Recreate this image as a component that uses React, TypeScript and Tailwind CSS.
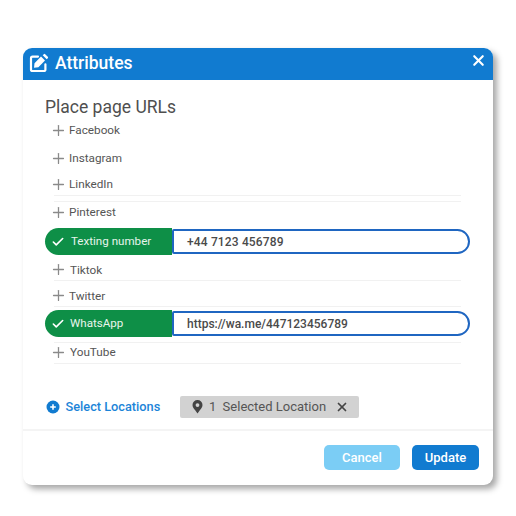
import React from "react";
import { X, Plus, Check } from "lucide-react";

const font = "font-['Roboto','Liberation_Sans',sans-serif]";

function PlusLabel({ label, gap }: { label: string; gap: string }) {
  return (
    <>
      <Plus className="w-[17px] h-[17px] -ml-[4.5px] text-[#8a8a8a] shrink-0" strokeWidth={1.8} />
      <span className={`${gap} text-[11.75px] leading-4 text-[#555555]`}>{label}</span>
    </>
  );
}

function PlainRow({ label, h, gap, extra }: { label: string; h: string; gap: string; extra?: string }) {
  return (
    <div className={`flex items-center ${h} ${extra ?? ""} w-[407px] ml-[9px]`}>
      <PlusLabel label={label} gap={gap} />
    </div>
  );
}

function ActiveRow({ label, value, gap, track }: { label: string; value: string; gap: string; track: string }) {
  return (
    <div className="flex items-center h-[27px] w-[425px]">
      <div className="flex items-center h-[27px] w-[127px] bg-[#0e8f47] rounded-l-[14px] pl-[6px] shrink-0">
        <Check className="w-[14px] h-[14px] text-white shrink-0" strokeWidth={2.8} />
        <span className={`${gap} text-[11.6px] text-[#e8f5ec]`}>{label}</span>
      </div>
      <div className={`flex-1 h-[25px] border-2 border-[#1f66c1] rounded-r-[13px] rounded-l-[2px] bg-white flex items-center pl-[13px] text-[12px] font-medium ${track} text-[#4a4a4a]`}>
        {value}
      </div>
    </div>
  );
}

export default function App() {
  return (
    <div className={`w-[516px] h-[516px] bg-white pt-[48px] pl-[23px] ${font}`}>
      <div className="w-[470px] h-[437px] bg-white rounded-[9px] shadow-[4px_4px_6px_rgba(0,0,0,0.35)] flex flex-col overflow-hidden">
        <div className="h-[32px] bg-[#117bd0] flex items-center justify-between pl-[6px] pr-[6px] shrink-0">
          <div className="flex items-center -mt-[3px]">
            <svg width="20" height="20" viewBox="0 0 20 20" fill="none" className="shrink-0">
              <path d="M9 3.6H3.6A1.6 1.6 0 0 0 2 5.2v11.2A1.6 1.6 0 0 0 3.6 18h11.2a1.6 1.6 0 0 0 1.6-1.6V11.4" stroke="white" strokeWidth="2.2" strokeLinecap="round" />
              <path d="M16.2 1.2l2.6 2.6a1 1 0 0 1 0 1.4l-1.1 1.1-4-4 1.1-1.1a1 1 0 0 1 1.4 0z M12 3.6l4 4-6.6 6.6-4.4.6.5-4.6z" fill="white" />
            </svg>
            <span className="ml-[6px] text-[17.5px] font-medium text-white leading-5">Attributes</span>
          </div>
          <X className="w-[17px] h-[17px] text-white -mt-[8px]" strokeWidth={3} />
        </div>

        <div className="flex-1 flex flex-col pl-[22px]">
          <h2 className="mt-[16px] text-[17.5px] leading-[22px] text-[#4f4f4f]">Place page URLs</h2>
          <div className="flex flex-col">
            <PlainRow label="Facebook" h="h-[24px]" gap="ml-[2.5px]" />
            <PlainRow label="Instagram" h="h-[32px]" gap="ml-[2.5px]" />
            <PlainRow label="LinkedIn" h="h-[22px]" gap="ml-[2.5px]" extra="border-b border-[#f1f1f1] pb-[1px]" />
            <PlainRow label="Pinterest" h="h-[27px]" gap="ml-[2.5px]" extra="mt-[5px] border-t border-[#f1f1f1] pb-[6px]" />
            <ActiveRow label="Texting number" value="+44 7123 456789" gap="ml-[6px]" track="tracking-[0.15px]" />
            <PlainRow label="Tiktok" h="h-[26px]" gap="ml-[3.5px]" extra="border-b border-[#f1f1f1] pt-[4px]" />
            <PlainRow label="Twitter" h="h-[26px]" gap="ml-[2.5px]" extra="border-b border-[#f1f1f1] pt-[4px]" />
            <div className="mt-[3px]">
              <ActiveRow label="WhatsApp" value="https://wa.me/447123456789" gap="ml-[5px]" track="tracking-normal" />
            </div>
            <PlainRow label="YouTube" h="h-[22px]" gap="ml-[3.5px]" extra="mt-[5px] border-y border-[#f1f1f1] pb-[2px]" />
          </div>
          <div className="flex items-center mt-[32px] h-[22px]">
            <svg width="14" height="14" viewBox="0 0 14 14" className="shrink-0 ml-[1px]">
              <circle cx="7" cy="7" r="6.5" fill="#117bd0" />
              <path d="M7 4.2v5.6M4.2 7h5.6" stroke="white" strokeWidth="1.6" />
            </svg>
            <span className="ml-[5.5px] w-[96px] shrink-0 whitespace-nowrap text-[12.75px] font-medium text-[#1c84d8]">Select Locations</span>
            <div className="ml-[18.5px] h-[22px] w-[179px] bg-[#d2d2d2] rounded-[2px] flex items-center pl-[12px] text-[#555555]">
              <svg width="11" height="14" viewBox="0 0 11 14" className="shrink-0">
                <path fillRule="evenodd" d="M5.5 0A5 5 0 0 1 10.5 5c0 2.2-1.3 3.6-2.5 5L5.5 13.6 3 10C1.8 8.6.5 7.2.5 5a5 5 0 0 1 5-5zm0 3.2a1.9 1.9 0 1 0 0 3.8 1.9 1.9 0 0 0 0-3.8z" fill="#444444" />
              </svg>
              <span className="ml-[6px] text-[13px] tracking-[0.3px]">1</span>
              <span className="ml-[6px] text-[13px]">Selected Location</span>
              <X className="w-[14px] h-[14px] ml-[9px] text-[#444444]" strokeWidth={3} />
            </div>
          </div>
        </div>

        <div className="h-[56px] border-t-2 border-[#f4f4f4] flex items-start justify-end pt-[14px] pr-[14px] gap-[12px] shrink-0">
          <div className="w-[76px] h-[25px] rounded-[5px] bg-[#7bcdf5] text-white text-[13px] font-medium flex items-center justify-center">Cancel</div>
          <div className="w-[67px] h-[25px] rounded-[5px] bg-[#117bd0] text-white text-[13px] font-medium flex items-center justify-center">Update</div>
        </div>
      </div>
    </div>
  );
}
